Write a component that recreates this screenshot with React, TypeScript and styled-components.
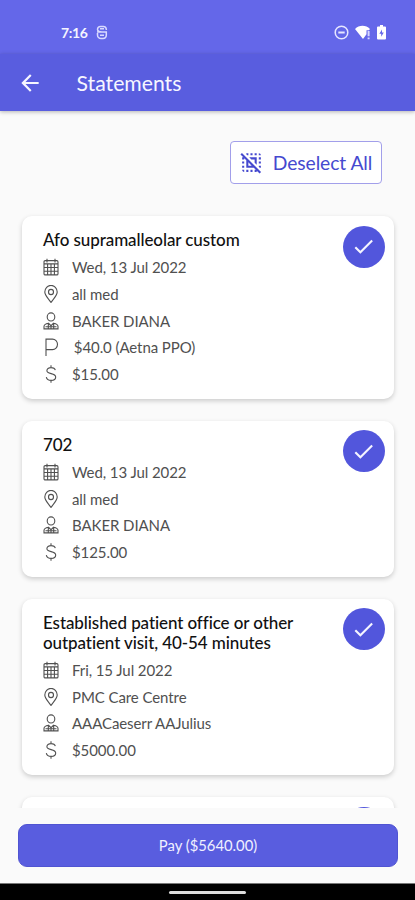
import React from "react";
import styled, { createGlobalStyle } from "styled-components";
import { MdArrowBack, MdCheck, MdDeselect } from "react-icons/md";

const GlobalStyle = createGlobalStyle`
  * { box-sizing: border-box; }
  body { margin: 0; background: #fafafa; font-family: Lato, "Open Sans", sans-serif; }
`;

const Screen = styled.div`
  height: 900px;
  display: flex;
  flex-direction: column;
  overflow: hidden;
  background: #fafafa;
`;

const StatusBar = styled.div`
  flex: none;
  height: 54px;
  padding: 11px 29px 0 61px;
  display: flex;
  align-items: center;
  justify-content: space-between;
  background: #6467e9;
  color: #f4f4ff;
`;

const StatusGroup = styled.div<{ $gap: number }>`
  display: flex;
  align-items: center;
  gap: ${(p) => p.$gap}px;
  svg { display: block; }
`;

const Clock = styled.span`
  font: 700 14px/18px Lato, sans-serif;
  letter-spacing: -0.4px;
`;

const AppBar = styled.header`
  flex: none;
  height: 57px;
  padding: 1px 17px 0;
  display: flex;
  align-items: center;
  gap: 33.6px;
  background: #595ddf;
  color: #f6f6ff;
  box-shadow: 0 1px 4px rgba(0, 0, 0, 0.28);
  z-index: 1;
  svg { display: block; }
`;

const PageTitle = styled.h1`
  margin: 0;
  font-size: 21.2px;
  line-height: 26px;
  font-weight: 400;
`;

const Content = styled.main`
  flex: none;
  height: 697px;
  overflow: hidden;
  padding: 30px 21px 0 22px;
  display: flex;
  flex-direction: column;
`;

const DeselectButton = styled.button`
  flex: none;
  align-self: flex-end;
  margin: 0 12px 32px 0;
  width: 152px;
  height: 43px;
  padding: 0 1px 0 0;
  display: flex;
  align-items: center;
  justify-content: center;
  gap: 9px;
  border: 1.5px solid #a29fea;
  border-radius: 4px;
  background: #fff;
  color: #4549cf;
  font: 400 19.3px/24px Lato, sans-serif;
  letter-spacing: -0.08px;
  white-space: nowrap;
  svg { display: block; flex: none; }
`;

const CardList = styled.div`
  flex: none;
  display: flex;
  flex-direction: column;
  gap: 21.9px;
`;

const Card = styled.article`
  min-height: 156px;
  padding: 14px 9.5px 11.8px 21px;
  display: flex;
  justify-content: space-between;
  align-items: flex-start;
  border-radius: 10px;
  background: #fff;
  box-shadow: 0 2px 5px rgba(0, 0, 0, 0.19);
`;

const CardTitle = styled.h2`
  margin: 0 0 4.2px;
  width: 270px;
  font-size: 17px;
  line-height: 20px;
  font-weight: 500;
  letter-spacing: -0.09px;
  font-variant-ligatures: none;
  color: #111;
`;

const Row = styled.div`
  height: 26.57px;
  display: flex;
  align-items: center;
  gap: 13px;
  color: #505050;
  font-size: 15px;
  line-height: 20px;
  letter-spacing: -0.08px;
  white-space: pre;
  svg { display: block; flex: none; }
`;

const CheckBadge = styled.span`
  flex: none;
  width: 42px;
  height: 42px;
  margin-top: -4.4px;
  border-radius: 50%;
  display: grid;
  place-items: center;
  background: #5256dc;
  color: #f4f4ff;
`;

const Footer = styled.footer`
  flex: none;
  height: 75px;
  padding: 16px 17px 0 18px;
`;

const PayButton = styled.button`
  display: block;
  width: 100%;
  height: 43px;
  padding: 0 0 1px;
  border: 1px solid #5054d2;
  border-radius: 9px;
  background: #595ddf;
  color: #f0f0ff;
  font: 400 14.8px/20px Lato, sans-serif;
`;

const NavBar = styled.div`
  flex: none;
  height: 17px;
  padding-top: 1px;
  display: grid;
  place-items: center;
  border-top: 1px solid #777;
  background: #000;
`;

const NavHandle = styled.span`
  width: 77px;
  height: 3px;
  border-radius: 2px;
  background: #ddd;
`;

type IconKind = "date" | "place" | "person" | "plan" | "price";

const iconShapes: Record<IconKind, React.ReactNode> = {
  date: (
    <>
      <rect x="1" y="2.5" width="14" height="13.5" rx="1.2" />
      <path d="M1 5.5h14M1 9h14M1 12.5h14M4.6 5.5V16M8 5.5V16M11.4 5.5V16M4 .7v3.5M12 .7v3.5" />
    </>
  ),
  place: (
    <>
      <path d="M8 16.4C5.4 12.7 1.8 9.8 1.8 6.6a6.2 6.2 0 0 1 12.4 0c0 3.2-3.6 6.1-6.2 9.8Z" />
      <circle cx="8" cy="6.6" r="2.5" />
    </>
  ),
  person: (
    <>
      <circle cx="8" cy="4.7" r="3.8" />
      <path d="M1 16v-2.2C1 11.7 3 11 5.4 10.6L8 13l2.6-2.4c2.4.4 4.4 1.1 4.4 3.2V16ZM5.3 10.8V16M10.7 10.8V16M8 13v3M2.5 13.9h11" />
    </>
  ),
  plan: <path d="M3 17V1h6.5a5 5 0 0 1 0 10H3" />,
  price: <path d="M12.3 4.9C11.9 3.3 10.4 2.5 8 2.5c-2.5 0-4.1 1.1-4.1 2.9C3.9 9.2 12.7 7 12.7 11.3c0 2-1.8 3.2-4.5 3.2-2.9 0-4.4-1.1-4.9-3.1M8 .2v2.3M8 14.5v2.3" />,
};

function RowIcon({ kind }: { kind: IconKind }) {
  return (
    <svg width="16" height="18" viewBox="0 0 16 17" preserveAspectRatio="none" fill="none" stroke="#505050" strokeWidth="1.1">
      {iconShapes[kind]}
    </svg>
  );
}

interface Statement {
  title: string;
  rows: [IconKind, string][];
}

const statements: Statement[] = [
  {
    title: "Afo supramalleolar custom",
    rows: [
      ["date", "Wed, 13 Jul 2022"],
      ["place", "all med"],
      ["person", "BAKER DIANA"],
      ["plan", "\u2009$40.0 (Aetna PPO)"],
      ["price", "$15.00"],
    ],
  },
  {
    title: "702",
    rows: [
      ["date", "Wed, 13 Jul 2022"],
      ["place", "all med"],
      ["person", "BAKER DIANA"],
      ["price", "$125.00"],
    ],
  },
  {
    title: "Established patient office or other outpatient visit, 40-54 minutes",
    rows: [
      ["date", "Fri, 15 Jul 2022"],
      ["place", "PMC Care Centre"],
      ["person", "AAACaeserr AAJulius"],
      ["price", "$5000.00"],
    ],
  },
  { title: "", rows: [] },
];

export default function App() {
  return (
    <>
      <GlobalStyle />
      <Screen>
        <StatusBar>
          <StatusGroup $gap={9}>
            <Clock>7:16</Clock>
            <svg width="12" height="15" viewBox="0 0 12 15" fill="none" stroke="#d9daff" strokeWidth="1.5">
              <path d="M10.3 5V4A3 3 0 0 0 7.3 1.5H4.5A3 3 0 0 0 1.5 4.3c0 2.3 1.5 2.7 4.5 2.7h4.3v3A3.5 3.5 0 0 1 7 13.5H5A3.5 3.5 0 0 1 1.5 10V8M1 7h10M4 3.8h4M4 10.3h4" />
            </svg>
          </StatusGroup>
          <StatusGroup $gap={6}>
            <svg width="15" height="15" viewBox="0 0 15 15" fill="none" stroke="#e6e6ff" strokeWidth="1.5">
              <circle cx="7.5" cy="7.5" r="6.3" />
              <path d="M4.3 7.5h6.4" strokeWidth="2" />
            </svg>
            <svg width="16" height="15" viewBox="0 0 16 15" fill="#fff">
              <path d="M0 4C4-.4 11-.4 15 4l-1 1.2h-2.5v4L8 14Z" />
              <path d="M12.6 6h2v5.3h-2zM12.6 12.5h2v1.7h-2z" fill="#d7d8ff" />
            </svg>
            <svg width="9" height="15" viewBox="0 0 9 15">
              <path d="M3 0h3v1.5h2A1 1 0 0 1 9 2.5V13.5a1 1 0 0 1-1 1H1a1 1 0 0 1-1-1V2.5a1 1 0 0 1 1-1h2Z" fill="#fff" />
              <path d="M5 4.5 2.3 8.7h1.9v3L6.8 7.4H5Z" fill="#6467e9" />
            </svg>
          </StatusGroup>
        </StatusBar>
        <AppBar>
          <MdArrowBack size={26} />
          <PageTitle>Statements</PageTitle>
        </AppBar>
        <Content>
          <DeselectButton>
            <MdDeselect size={25} />
            Deselect All
          </DeselectButton>
          <CardList>
            {statements.map((statement, index) => (
              <Card key={index}>
                <div>
                  <CardTitle>{statement.title}</CardTitle>
                  {statement.rows.map(([kind, text]) => (
                    <Row key={kind}>
                      <RowIcon kind={kind} />
                      {text}
                    </Row>
                  ))}
                </div>
                <CheckBadge>
                  <MdCheck size={25} />
                </CheckBadge>
              </Card>
            ))}
          </CardList>
        </Content>
        <Footer>
          <PayButton>Pay ($5640.00)</PayButton>
        </Footer>
        <NavBar>
          <NavHandle />
        </NavBar>
      </Screen>
    </>
  );
}
